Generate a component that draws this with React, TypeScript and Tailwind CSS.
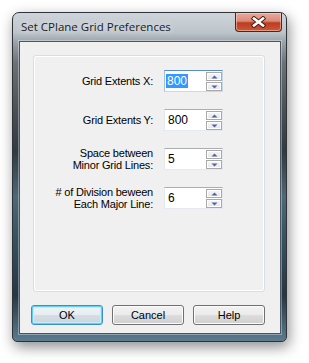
import React from "react";

const font = { fontFamily: '"Liberation Sans", Arial, sans-serif' };

function Spin({ dir }: { dir: "up" | "down" }) {
  return (
    <div className="h-[9px] w-full border border-[#a9a9a9] bg-[linear-gradient(180deg,#f6f6f6_0%,#e6e6e6_100%)] shadow-[inset_0_0_0_1px_#ffffff] flex items-center justify-center">
      <svg width="7" height="4" viewBox="0 0 7 4">
        {dir === "up" ? (
          <polygon points="0.5,3.5 3.5,0.5 6.5,3.5" fill="#4d64a6" />
        ) : (
          <polygon points="0.5,0.5 3.5,3.5 6.5,0.5" fill="#4d64a6" />
        )}
      </svg>
    </div>
  );
}

function Field({ value, focused }: { value: string; focused?: boolean }) {
  return (
    <div
      className={
        "w-[59px] h-[22px] flex bg-white border " +
        (focused
          ? "border-[#c5daed] border-t-[#5b8cc0] border-l-[#a4c2df]"
          : "border-[#e3e9ef] border-t-[#abadb3]")
      }
    >
      <div className="flex-1 flex items-center pl-[1px] text-[12px] leading-[12px] text-black">
        {focused ? (
          <span className="bg-[#3399ff] text-white px-[1px] py-[1px]">{value}</span>
        ) : (
          <span className="px-[2px]">{value}</span>
        )}
      </div>
      <div className="w-[16px] flex flex-col gap-[1px] pt-[1px]">
        <Spin dir="up" />
        <Spin dir="down" />
      </div>
    </div>
  );
}

function Row({ label, value, focused }: { label: React.ReactNode; value: string; focused?: boolean }) {
  return (
    <div className="flex items-center h-[22px]">
      <div className="w-[119px] text-right text-[11px] leading-[12px] tracking-[-0.2px] text-black">{label}</div>
      <div className="ml-[11px]">
        <Field value={value} focused={focused} />
      </div>
    </div>
  );
}

function Btn({ label, def }: { label: string; def?: boolean }) {
  return (
    <div
      className={
        "w-[72px] h-[20px] rounded-[3px] border flex items-center justify-center text-[11px] text-black " +
        (def
          ? "border-[#3c8fc8] bg-[linear-gradient(180deg,#f0f4f7_0%,#e6ecf0_50%,#d6dee4_51%,#cbd5dc_100%)] shadow-[inset_0_0_0_1px_#62d0f6,inset_0_0_0_2px_#c4ecfb]"
          : "border-[#707070] bg-[linear-gradient(180deg,#f2f2f2_0%,#ebebeb_50%,#dddddd_51%,#cfcfcf_100%)] shadow-[inset_0_0_0_1px_#fcfcfc]")
      }
    >
      {label}
    </div>
  );
}

export default function App() {
  return (
    <div className="w-[309px] h-[363px] bg-white pl-[12px] pt-[12px] overflow-hidden" style={font}>
      <div className="w-[275px] h-[330px] flex flex-col rounded-t-[7px] rounded-b-[5px] border border-[#2f3336] shadow-[2px_5px_14px_rgba(0,0,0,0.45)] bg-[linear-gradient(180deg,#ced4da_0%,#bcc4cb_6%,#9aa2a9_9%,#6c7378_15%,#4e5458_28%,#2f3a41_42%,#4d6878_56%,#34505f_70%,#263745_86%,#5b7b90_100%)]">
        <div className="h-[28px] flex items-start">
          <div
            className="pl-[8px] pt-[5px] text-[11.5px] text-[#1a1a1a] [text-shadow:0_0_6px_rgba(255,255,255,0.9)]"
            style={{ fontFamily: '"Open Sans", "Noto Sans", sans-serif' }}
          >
            Set CPlane Grid Preferences
          </div>
          <div className="ml-auto mr-[4px] w-[47px] h-[19px] rounded-b-[4px] border border-t-0 border-[#5a2015] bg-[linear-gradient(180deg,#e9a99b_0%,#d98a7a_45%,#c0391f_55%,#c85a3a_100%)] shadow-[inset_0_0_0_1px_rgba(255,220,210,0.5)] flex items-center justify-center">
            <svg width="15" height="12" viewBox="0 0 15 12">
              <path d="M3 2.5 L12 9.5 M12 2.5 L3 9.5" stroke="#4a1a10" strokeWidth="4.4" strokeLinecap="square" />
              <path d="M3 2.5 L12 9.5 M12 2.5 L3 9.5" stroke="#ffffff" strokeWidth="2.6" strokeLinecap="square" />
            </svg>
          </div>
        </div>
        <div className="ml-[6px] mr-[5px] mb-[7px] flex-1 bg-[#f0f0f0] border border-[#4a555d] shadow-[0_0_0_1px_rgba(255,255,255,0.35)] flex flex-col">
          <div className="ml-[13px] mt-[13px] w-[232px] h-[237px] rounded-[3px] border border-[#d5dfe5] shadow-[inset_0_0_0_1px_#ffffff] pt-[14px] flex flex-col gap-[17px]">
            <Row label="Grid Extents X:" value="800" focused />
            <Row label="Grid Extents Y:" value="800" />
            <Row
              label={
                <>
                  Space between
                  <br />
                  Minor Grid Lines:
                </>
              }
              value="5"
            />
            <Row
              label={
                <>
                  # of Division beween
                  <br />
                  Each Major Line:
                </>
              }
              value="6"
            />
          </div>
          <div className="ml-[11px] mt-[13px] flex gap-[9px]">
            <Btn label="OK" def />
            <Btn label="Cancel" />
            <Btn label="Help" />
          </div>
        </div>
      </div>
    </div>
  );
}
